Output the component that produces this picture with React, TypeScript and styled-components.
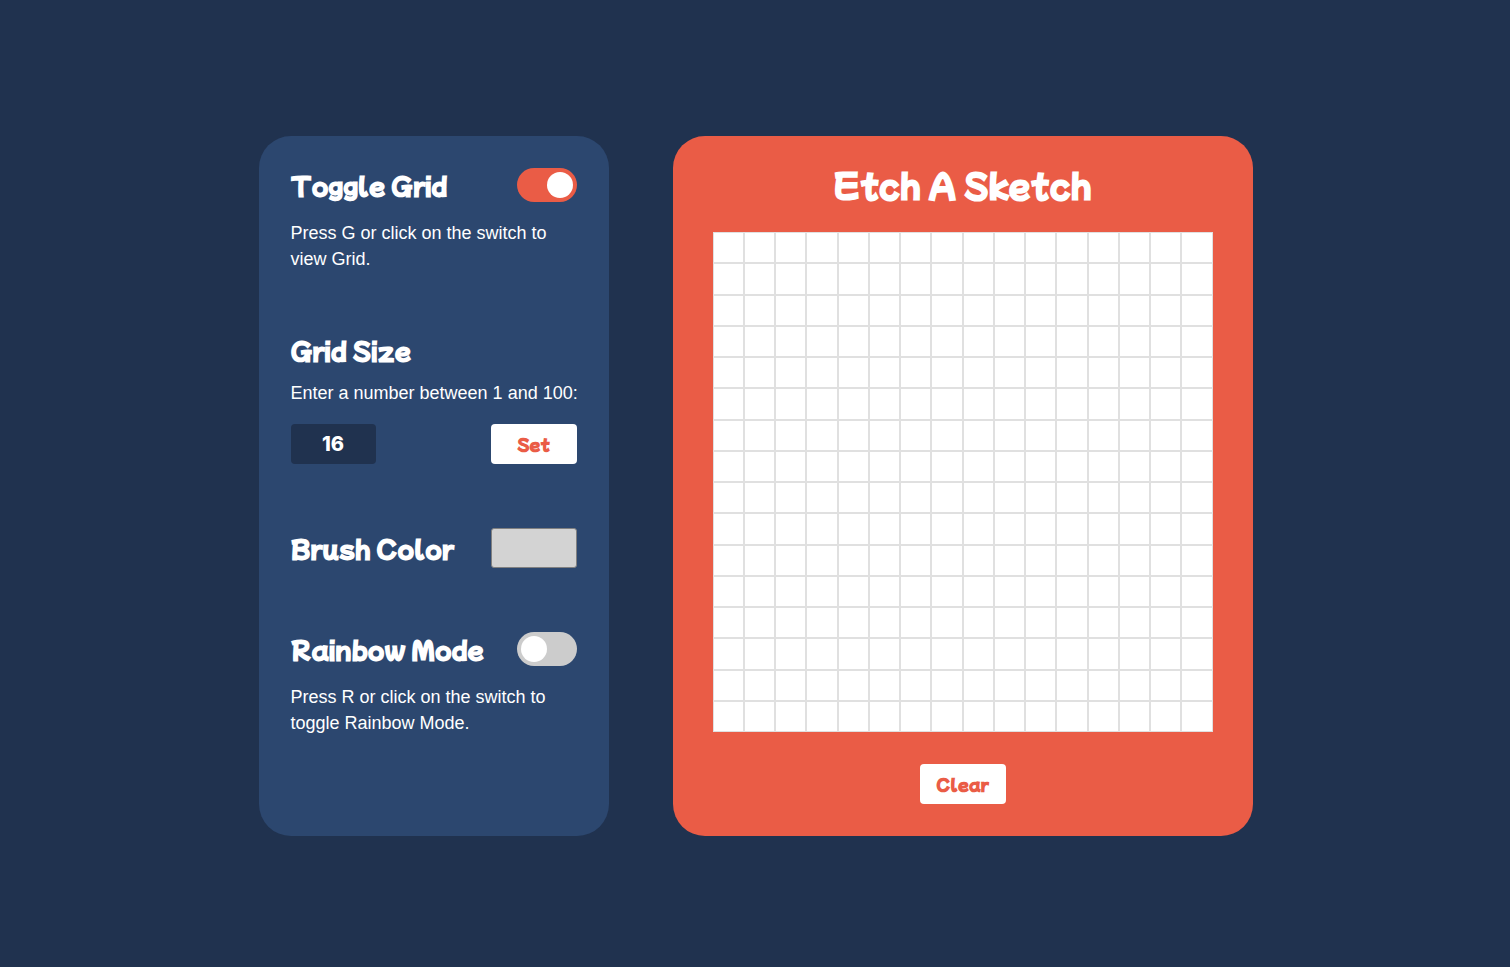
import React, { useEffect, useState } from "react";
import styled, { createGlobalStyle } from "styled-components";

const navy = "#20324f";
const blue = "#2c476f";
const coral = "#ea5c46";
const display = `"Mochiy Pop One", Lato, "Open Sans", sans-serif`;

const GlobalStyle = createGlobalStyle`
  * { box-sizing: border-box; margin: 0; }
  body {
    background: ${navy};
    color: #fff;
    font-family: "Liberation Sans", Arial, sans-serif;
  }
`;

const Page = styled.main`
  display: flex;
  flex-wrap: wrap;
  justify-content: center;
  align-content: center;
  gap: 64px;
  min-height: 100vh;
  padding: 5px 0 0 1px;
`;

const Panel = styled.section`
  min-width: 0;
  border-radius: 32px;
  padding: 32px;
`;

const Settings = styled(Panel)`
  display: flex;
  flex-direction: column;
  gap: 64px;
  flex: 0 1 350px;
  background: ${blue};
`;

const Sketch = styled(Panel)`
  display: flex;
  flex-direction: column;
  align-items: center;
  flex: 0 1 580px;
  padding: 32px 40px;
  background: ${coral};
`;

const Title = styled.h1`
  margin-bottom: 32px;
  font: 700 32px/32px ${display};
`;

const Heading = styled.h2`
  font: 700 24px/28px ${display};
`;

const Row = styled.div`
  display: flex;
  align-items: center;
  justify-content: space-between;
`;

const Setting = styled.div``;

const Hint = styled.p`
  margin-top: 18px;
  font-size: 18px;
  line-height: 26px;
`;

const HintLabel = styled.label`
  display: block;
  margin: 16px 0 18px;
  font-size: 18px;
  line-height: 26px;
  white-space: nowrap;
`;

const Button = styled.button`
  width: 86px;
  height: 40px;
  padding: 0;
  border: 0;
  border-radius: 4px;
  background: #fff;
  color: ${coral};
  font: 700 16px/40px ${display};
  cursor: pointer;
`;

const ClearButton = styled(Button)`
  margin-top: 32px;
`;

const SizeInput = styled.input`
  width: 85px;
  height: 40px;
  border: 0;
  border-radius: 4px;
  background: ${navy};
  color: #fff;
  font: 800 20px/40px Inter, sans-serif;
  text-align: center;
`;

const ColorInput = styled.input`
  width: 86px;
  height: 40px;
  padding: 0;
  border: 0;
  background: none;

  &::-webkit-color-swatch-wrapper { padding: 0; }
  &::-webkit-color-swatch {
    border: 1px solid #808080;
    border-radius: 3px;
  }
`;

const Switch = styled.input`
  appearance: none;
  display: flex;
  align-items: center;
  width: 60px;
  height: 34px;
  padding: 4px;
  border-radius: 17px;
  background: #ccc;
  cursor: pointer;

  &::before {
    content: "";
    width: 26px;
    height: 26px;
    border-radius: 50%;
    background: #fff;
  }
  &:checked {
    justify-content: flex-end;
    background: ${coral};
  }
`;

const Board = styled.div<{ $size: number }>`
  display: grid;
  grid-template: repeat(${({ $size }) => $size}, 1fr) / repeat(${({ $size }) => $size}, 1fr);
  width: 100%;
  aspect-ratio: 1;
  background: #fff;
`;

const Cell = styled.div<{ $lines: boolean }>`
  border: ${({ $lines }) => ($lines ? "1px solid #e0e0e0" : "0")};
`;

export default function App() {
  const [lines, setLines] = useState(true);
  const [rainbow, setRainbow] = useState(false);
  const [color, setColor] = useState("#d3d3d3");
  const [draft, setDraft] = useState("16");
  const [size, setSize] = useState(16);
  const [paint, setPaint] = useState<Record<number, string>>({});

  useEffect(() => {
    const onKey = (e: KeyboardEvent) => {
      if (e.key.toLowerCase() === "g") setLines((v) => !v);
      if (e.key.toLowerCase() === "r") setRainbow((v) => !v);
    };
    window.addEventListener("keydown", onKey);
    return () => window.removeEventListener("keydown", onKey);
  }, []);

  const applySize = () => {
    const next = Number(draft);
    if (next >= 1 && next <= 100) {
      setSize(Math.floor(next));
      setPaint({});
    }
  };

  const draw = (i: number) =>
    setPaint((p) => ({
      ...p,
      [i]: rainbow ? `hsl(${Math.floor(Math.random() * 360)} 90% 60%)` : color,
    }));

  return (
    <>
      <GlobalStyle />
      <Page>
        <Settings>
          <Setting>
            <Row>
              <Heading><label htmlFor="grid">Toggle Grid</label></Heading>
              <Switch id="grid" type="checkbox" checked={lines} onChange={(e) => setLines(e.target.checked)} />
            </Row>
            <Hint>Press G or click on the switch to view Grid.</Hint>
          </Setting>
          <Setting>
            <Heading>Grid Size</Heading>
            <HintLabel htmlFor="size">Enter a number between 1 and 100:</HintLabel>
            <Row>
              <SizeInput id="size" type="text" inputMode="numeric" value={draft} onChange={(e) => setDraft(e.target.value)} />
              <Button type="button" onClick={applySize}>Set</Button>
            </Row>
          </Setting>
          <Row>
            <Heading><label htmlFor="color">Brush Color</label></Heading>
            <ColorInput id="color" type="color" value={color} onChange={(e) => setColor(e.target.value)} />
          </Row>
          <Setting>
            <Row>
              <Heading><label htmlFor="rainbow">Rainbow Mode</label></Heading>
              <Switch id="rainbow" type="checkbox" checked={rainbow} onChange={(e) => setRainbow(e.target.checked)} />
            </Row>
            <Hint>Press R or click on the switch to toggle Rainbow Mode.</Hint>
          </Setting>
        </Settings>
        <Sketch>
          <Title>Etch A Sketch</Title>
          <Board $size={size}>
            {Array.from({ length: size * size }, (_, i) => (
              <Cell key={i} $lines={lines} style={paint[i] ? { background: paint[i] } : undefined} onMouseEnter={() => draw(i)} />
            ))}
          </Board>
          <ClearButton type="button" onClick={() => setPaint({})}>Clear</ClearButton>
        </Sketch>
      </Page>
    </>
  );
}
